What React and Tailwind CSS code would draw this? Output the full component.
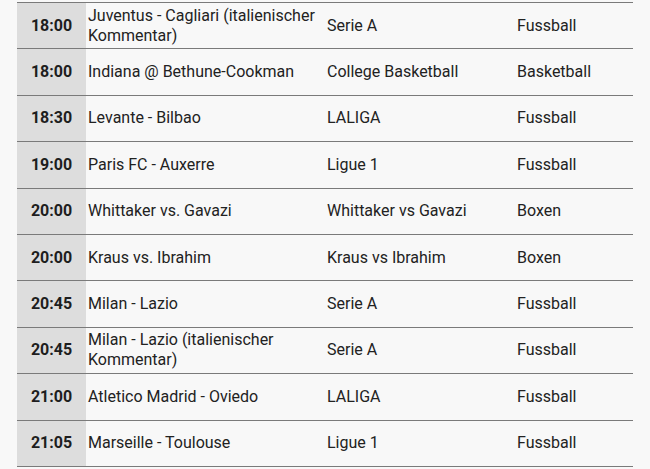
import React from "react";

const rows = [
  ["18:00", "Juventus - Cagliari (italienischer Kommentar)", "Serie A", "Fussball"],
  ["18:00", "Indiana @ Bethune-Cookman", "College Basketball", "Basketball"],
  ["18:30", "Levante - Bilbao", "LALIGA", "Fussball"],
  ["19:00", "Paris FC - Auxerre", "Ligue 1", "Fussball"],
  ["20:00", "Whittaker vs. Gavazi", "Whittaker vs Gavazi", "Boxen"],
  ["20:00", "Kraus vs. Ibrahim", "Kraus vs Ibrahim", "Boxen"],
  ["20:45", "Milan - Lazio", "Serie A", "Fussball"],
  ["20:45", "Milan - Lazio (italienischer Kommentar)", "Serie A", "Fussball"],
  ["21:00", "Atletico Madrid - Oviedo", "LALIGA", "Fussball"],
  ["21:05", "Marseille - Toulouse", "Ligue 1", "Fussball"],
];

export default function App() {
  return (
    <div
      className="w-[650px] h-[469px] overflow-hidden bg-[#f8f8f8] pt-[2px]"
      style={{ fontFamily: "Roboto, 'Liberation Sans', sans-serif" }}
    >
      <div className="ml-[17px] w-[616px] border-t-[1.5px] border-[#7a7a7a]">
        {rows.map((r, i) => (
          <div
            key={i}
            className="flex h-[46.4px] border-b-[1.5px] border-[#7a7a7a] text-[16px] text-[#222] leading-[20px]"
          >
            <div className="w-[69px] bg-[#dddddd] flex items-center justify-center font-bold text-[#1e1e1e]">
              {r[0]}
            </div>
            <div className="w-[240px] flex items-center pl-[2px] pr-1">{r[1]}</div>
            <div className="w-[189px] flex items-center pl-[1px]">{r[2]}</div>
            <div className="flex-1 flex items-center pl-[2px]">{r[3]}</div>
          </div>
        ))}
      </div>
    </div>
  );
}
